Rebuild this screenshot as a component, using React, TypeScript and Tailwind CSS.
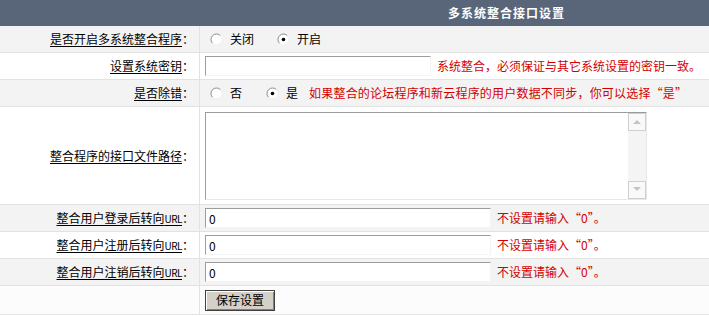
import type { ReactNode } from "react";

const font = { fontFamily: '"Noto Sans CJK SC", "Noto Sans", sans-serif' };

function Radio({ checked }: { checked?: boolean }) {
  return (
    <svg width="13" height="13" viewBox="0 0 13 13" className="shrink-0">
      <circle cx="6.5" cy="6.5" r="5.5" fill="#fff" />
      <path d="M10.4 2.6 A5.5 5.5 0 0 0 2.6 10.4" fill="none" stroke="#8a8a8a" strokeWidth="1" />
      <path d="M2.6 10.4 A5.5 5.5 0 0 0 10.4 2.6" fill="none" stroke="#f0f0f0" strokeWidth="1" />
      {checked && <circle cx="6.5" cy="6.5" r="1.8" fill="#000" />}
    </svg>
  );
}

function Row({ label, url, bg, h, children }: { label?: string; url?: boolean; bg: string; h: string; children: ReactNode }) {
  return (
    <div className={`flex border-b border-[#e2e2e2] ${bg} ${h}`}>
      <div className="flex w-[200px] shrink-0 items-center justify-end border-r border-[#e2e2e2] pr-[5px]">
        {label && (
          <>
            <span className="underline underline-offset-2">
              {label}
              {url && <span className="text-[10px] tracking-[-0.5px]">URL</span>}
            </span>
            <span className="w-[12px]">：</span>
          </>
        )}
      </div>
      <div className="flex flex-1 items-center pl-[5px]">{children}</div>
    </div>
  );
}

const hint = "text-[#d40000]";
const inputCls =
  "h-[20px] bg-white border border-t-[#9c9c9c] border-l-[#9c9c9c] border-r-[#f4f4f4] border-b-[#f4f4f4] pl-[3px] text-[12px] outline-none";

export default function App() {
  return (
    <div className="w-[709px] h-[316px] bg-white text-[12px] leading-[14px] text-black" style={font}>
      <div className="flex h-[26px] items-center bg-[#59667a] pl-[448px] font-bold text-white tracking-[1px]">
        多系统整合接口设置
      </div>

      <Row label="是否开启多系统整合程序" bg="bg-[#f3f3f3]" h="h-[27px]">
        <span className="ml-[5px]" />
        <Radio />
        <span className="ml-[7px]">关闭</span>
        <span className="ml-[23px]" />
        <Radio checked />
        <span className="ml-[7px]">开启</span>
      </Row>

      <Row label="设置系统密钥" bg="bg-white" h="h-[27px]">
        <input className={`${inputCls} w-[226px]`} defaultValue="" />
        <span className={`ml-[6px] ${hint}`}>系统整合，必须保证与其它系统设置的密钥一致。</span>
      </Row>

      <Row label="是否除错" bg="bg-[#f3f3f3]" h="h-[27px]">
        <span className="ml-[5px]" />
        <Radio />
        <span className="ml-[7px]">否</span>
        <span className="ml-[24px]" />
        <Radio checked />
        <span className="ml-[7px]">是</span>
        <span className={`ml-[11px] tracking-[0.2px] ${hint}`}>如果整合的论坛程序和新云程序的用户数据不同步，你可以选择“是”</span>
      </Row>

      <Row label="整合程序的接口文件路径" bg="bg-white" h="h-[98px]">
        <div className="flex h-[88px] w-[442px] border border-t-[#9c9c9c] border-l-[#9c9c9c] border-r-[#e8e8e8] border-b-[#e8e8e8] bg-white">
          <div className="flex-1" />
          <div className="flex w-[18px] flex-col justify-between bg-[#f4f4f4]">
            <div className="flex h-[18px] items-center justify-center border border-[#cfcfcf] bg-[#f9f9f9]">
              <svg width="8" height="5" viewBox="0 0 8 5">
                <path d="M0 5 L4 1 L8 5 Z" fill="#c4c4c4" />
              </svg>
            </div>
            <div className="flex h-[18px] items-center justify-center border border-[#cfcfcf] bg-[#f9f9f9]">
              <svg width="8" height="5" viewBox="0 0 8 5">
                <path d="M0 0 L4 4 L8 0 Z" fill="#c4c4c4" />
              </svg>
            </div>
          </div>
        </div>
      </Row>

      {[
        { label: "整合用户登录后转向", bg: "bg-[#f3f3f3]" },
        { label: "整合用户注册后转向", bg: "bg-white" },
        { label: "整合用户注销后转向", bg: "bg-[#f3f3f3]" },
      ].map((r) => (
        <Row key={r.label} label={r.label} url bg={r.bg} h="h-[27px]">
          <input className={`${inputCls} w-[286px]`} defaultValue="0" />
          <span className={`ml-[6px] ${hint}`}>不设置请输入“0”。</span>
        </Row>
      ))}

      <Row bg="bg-[#fcfcfc]" h="h-[29px]">
        <button className="h-[21px] w-[70px] border border-[#404040] bg-[#d4d0c8] text-[12px] leading-[14px] shadow-[inset_1px_1px_0_#fff,inset_-1px_-1px_0_#808080]">
          保存设置
        </button>
      </Row>
    </div>
  );
}
